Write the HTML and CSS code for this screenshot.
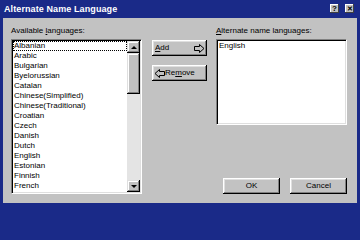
FILE: index.html
```html
<!DOCTYPE html>
<html>
<head>
<meta charset="utf-8">
<link rel="stylesheet" href="styles.css">
</head>
<body>
<div class="window">
  <div class="titlebar">
    <span class="title">Alternate Name Language</span>
    <div class="tbtns">
      <span class="tbtn">?</span>
      <span class="tbtn close">✕</span>
    </div>
  </div>
  <div class="content">
    <div class="col left">
      <div class="label">Available <u>l</u>anguages:</div>
      <div class="listbox big">
        <div class="items">
          <div class="item focus">Albanian</div>
          <div class="item">Arabic</div>
          <div class="item">Bulgarian</div>
          <div class="item">Byelorussian</div>
          <div class="item">Catalan</div>
          <div class="item">Chinese(Simplified)</div>
          <div class="item">Chinese(Traditional)</div>
          <div class="item">Croatian</div>
          <div class="item">Czech</div>
          <div class="item">Danish</div>
          <div class="item">Dutch</div>
          <div class="item">English</div>
          <div class="item">Estonian</div>
          <div class="item">Finnish</div>
          <div class="item">French</div>
        </div>
        <div class="scrollbar">
          <div class="sbtn"><span class="tri up"></span></div>
          <div class="thumb"></div>
          <div class="track"></div>
          <div class="sbtn"><span class="tri down"></span></div>
        </div>
      </div>
    </div>
    <div class="col mid">
      <div class="btn addbtn"><span><u>A</u>dd</span>
        <svg class="arrow" width="11" height="9" viewBox="0 0 11 9"><path d="M0.5 2.5 H5.5 V0.5 L10 4.5 L5.5 8.5 V6.5 H0.5 Z" fill="none" stroke="#000" stroke-width="1"/></svg>
      </div>
      <div class="btn rembtn">
        <svg class="arrow" width="11" height="9" viewBox="0 0 11 9"><path d="M10.5 2.5 H5.5 V0.5 L1 4.5 L5.5 8.5 V6.5 H10.5 Z" fill="none" stroke="#000" stroke-width="1"/></svg>
        <span>Re<u>m</u>ove</span>
      </div>
    </div>
    <div class="col right">
      <div class="label"><u>A</u>lternate name languages:</div>
      <div class="listbox small">
        <div class="items">
          <div class="item">English</div>
        </div>
      </div>
      <div class="actions">
        <div class="btn okbtn">OK</div>
        <div class="btn cancelbtn">Cancel</div>
      </div>
    </div>
  </div>
</div>
</body>
</html>
```

FILE: styles.css
```css
* { box-sizing: border-box; }
html, body { margin: 0; padding: 0; }
body {
  width: 360px;
  height: 206px;
  overflow: hidden;
  font-family: "Liberation Sans", Arial, sans-serif;
  font-size: 8px;
  color: #000;
  background: #1a2a88;
}
.window {
  width: 360px;
  height: 206px;
  background: #1a2a88;
  padding: 0 3px 3px 3px;
  display: flex;
  flex-direction: column;
}
.titlebar {
  height: 18px;
  display: flex;
  align-items: center;
  justify-content: space-between;
  padding: 0 3px 1px 1px;
}
.title {
  color: #fff;
  font-weight: bold;
  font-size: 9px;
  letter-spacing: 0.1px;
}
.tbtns { display: flex; gap: 6px; }
.tbtn {
  width: 9px;
  height: 9px;
  background: #c0c0c0;
  box-shadow: inset -1px -1px #404040, inset 1px 1px #fff;
  font-size: 8px;
  font-weight: bold;
  line-height: 9px;
  text-align: center;
  color: #000;
}
.tbtn.close { font-size: 7px; }
.content {
  flex: 1;
  background: #c2c2c2;
  display: flex;
  padding: 8px 10px 9px 8px;
}
.col { display: flex; flex-direction: column; }
.left { width: 131px; }
.mid { width: 55px; margin-left: 10px; padding-top: 14px; gap: 9px; }
.right { width: 131px; margin-left: 9px; }
.label { height: 10px; line-height: 10px; margin-bottom: 3px; white-space: nowrap; }
.listbox {
  background: #fff;
  border-top: 1px solid #808080;
  border-left: 1px solid #808080;
  border-right: 1px solid #fff;
  border-bottom: 1px solid #fff;
  box-shadow: inset 1px 1px #000, inset -1px -1px #dfdfdf;
  padding: 1px;
  display: flex;
  overflow: hidden;
}
.listbox.big { height: 155px; }
.listbox.small { height: 86px; }
.items { flex: 1; overflow: hidden; }
.item {
  height: 10px;
  line-height: 10px;
  padding-left: 1px;
  white-space: nowrap;
}
.item.focus { outline: 1px dotted #000; outline-offset: -1px; }
.scrollbar {
  width: 13px;
  display: flex;
  flex-direction: column;
}
.sbtn {
  height: 12px;
  background: #c0c0c0;
  box-shadow: inset -1px -1px #000, inset 1px 1px #dfdfdf, inset -2px -2px #808080, inset 2px 2px #fff;
  display: flex;
  align-items: center;
  justify-content: center;
}
.tri { width: 0; height: 0; border-left: 3px solid transparent; border-right: 3px solid transparent; }
.tri.up { border-bottom: 3px solid #000; }
.tri.down { border-top: 3px solid #000; }
.thumb {
  height: 41px;
  background: #c0c0c0;
  box-shadow: inset -1px -1px #000, inset 1px 1px #dfdfdf, inset -2px -2px #808080, inset 2px 2px #fff;
}
.track { flex: 1; background: #e4e4e4; }
.btn {
  height: 16px;
  background: #c2c2c2;
  box-shadow: inset -1px -1px #000, inset 1px 1px #fff, inset -2px -2px #808080, inset 2px 2px #dfdfdf;
  display: flex;
  align-items: center;
  line-height: 10px;
}
.addbtn { justify-content: space-between; padding: 0 2px 0 3px; }
.rembtn { padding: 0 2px; }
.arrow { display: block; }
.actions {
  margin-top: auto;
  display: flex;
  justify-content: flex-end;
  gap: 10px;
}
.okbtn, .cancelbtn { width: 57px; justify-content: center; }
```
